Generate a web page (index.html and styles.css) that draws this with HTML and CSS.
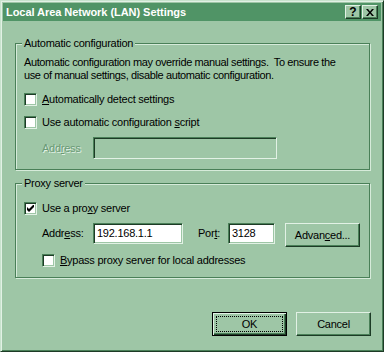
FILE: index.html
```html
<!DOCTYPE html>
<html lang="en">
  <head>
    <meta charset="UTF-8" />
    <title>Local Area Network (LAN) Settings</title>
    <link rel="stylesheet" href="styles.css">
  </head>
  <body>
    <div class="window">
      <div class="titlebar">
        <span class="title">Local Area Network (LAN) Settings</span>
        <div class="caption-buttons">
          <span class="cap-btn help">?</span>
          <span class="cap-btn">
            <svg width="8" height="7" viewBox="0 0 8 7">
              <path d="M0 0h2l2 2.5L6 0h2L5 3.5 8 7H6L4 4.5 2 7H0l3-3.5z" fill="#000" />
            </svg>
          </span>
        </div>
      </div>

      <div class="content">
        <fieldset class="group group-auto">
          <legend>Automatic configuration</legend>
          <p class="note">
            Automatic configuration may override manual settings.&nbsp; To ensure the<br />
            use of manual settings, disable automatic configuration.
          </p>
          <label class="check check-first">
            <span class="box"></span>
            <span><u>A</u>utomatically detect settings</span>
          </label>
          <label class="check">
            <span class="box"></span>
            <span>Use automatic configuration <u>s</u>cript</span>
          </label>
          <div class="field-row disabled">
            <span class="field-label">Add<u>r</u>ess</span>
            <span class="input input-wide"></span>
          </div>
        </fieldset>

        <fieldset class="group group-proxy">
          <legend>Proxy server</legend>
          <label class="check check-proxy">
            <span class="box">
              <svg width="7" height="7" viewBox="0 0 7 7">
                <path d="M0 2v3l2 2 5-5V-1L2 4z" fill="#000" />
              </svg>
            </span>
            <span>Use a pro<u>x</u>y server</span>
          </label>
          <div class="field-row proxy-row">
            <span class="field-label">Addr<u>e</u>ss:</span>
            <span class="input input-address">192.168.1.1</span>
            <span class="port-label">Por<u>t</u>:</span>
            <span class="input input-port">3128</span>
            <span class="btn btn-advanced">Advan<u>c</u>ed...</span>
          </div>
          <label class="check check-bypass">
            <span class="box"></span>
            <span><u>B</u>ypass proxy server for local addresses</span>
          </label>
        </fieldset>

        <div class="dialog-buttons">
          <span class="btn btn-default"><span class="focus">OK</span></span>
          <span class="btn">Cancel</span>
        </div>
      </div>
    </div>
  </body>
</html>
```

FILE: styles.css
```css
* {
  box-sizing: border-box;
}
body {
  margin: 0;
  font-family: "Liberation Sans", Arial, sans-serif;
  font-size: 11px;
  line-height: 13px;
  letter-spacing: -0.25px;
  color: #000;
}
.window {
  width: 384px;
  height: 352px;
  padding: 2px;
  background: #9ec6a6;
  border: 1px solid;
  border-color: #c8e3cd #1d3b26 #1d3b26 #c8e3cd;
  box-shadow: inset 1px 1px 0 #e2f1e5, inset -1px -1px 0 #4a8058;
  display: flex;
  flex-direction: column;
}
.titlebar {
  height: 18px;
  background: #509466;
  color: #fff;
  font-weight: bold;
  letter-spacing: -0.05px;
  display: flex;
  align-items: center;
  padding: 0 3px 0 3px;
}
.caption-buttons {
  margin-left: auto;
  display: flex;
  gap: 1px;
}
.cap-btn {
  width: 16px;
  height: 14px;
  background: #9ec6a6;
  border: 1px solid;
  border-color: #e2f1e5 #1d3b26 #1d3b26 #e2f1e5;
  box-shadow: inset -1px -1px 0 #4a8058;
  display: flex;
  align-items: center;
  justify-content: center;
  color: #000;
}
.cap-btn.help {
  font-size: 12px;
  padding-top: 1px;
}
.content {
  flex: 1;
  display: flex;
  flex-direction: column;
  padding: 0 11px 0 12px;
}
.group {
  margin: 0;
  padding: 0 8px;
  border: 1px solid #4a8058;
  box-shadow: 1px 1px 0 #d6ebda, inset 1px 1px 0 #d6ebda;
  min-inline-size: 0;
}
.group legend {
  padding: 0 2px;
  margin-left: -2px;
  background: #9ec6a6;
  line-height: 13px;
}
.group-auto {
  margin-top: 16px;
  padding-bottom: 10px;
}
.group-proxy {
  margin-top: 7px;
  padding-bottom: 10px;
}
.note {
  margin: 6px 0 0;
  white-space: nowrap;
  letter-spacing: -0.38px;
}
.check {
  display: flex;
  align-items: center;
  gap: 5px;
  height: 13px;
}
.check-first {
  margin-top: 11px;
}
.check + .check {
  margin-top: 10px;
}
.check-proxy {
  margin-top: 12px;
}
.check-bypass {
  margin-top: 7px;
  margin-left: 18px;
}
.box {
  width: 13px;
  height: 13px;
  background: #fff;
  border: 1px solid;
  border-color: #4a8058 #e2f1e5 #e2f1e5 #4a8058;
  box-shadow: inset 1px 1px 0 #1d3b26, inset -1px -1px 0 #9ec6a6;
  display: flex;
  align-items: center;
  justify-content: center;
  flex-shrink: 0;
}
.field-row {
  display: flex;
  align-items: flex-start;
  padding-left: 18px;
  margin-top: 8px;
}
.field-label {
  width: 51px;
  align-self: center;
}
.input {
  height: 21px;
  background: #fff;
  border: 1px solid;
  border-color: #4a8058 #e2f1e5 #e2f1e5 #4a8058;
  box-shadow: inset 1px 1px 0 #1d3b26, inset -1px -1px 0 #9ec6a6;
  padding: 3px 3px 0;
}
.disabled .field-label {
  color: #6a9a76;
  text-shadow: 1px 1px 0 #e2f1e5;
}
.disabled .input {
  height: 22px;
  background: #9ec6a6;
}
.input-wide {
  width: 184px;
}
.proxy-row .field-label,
.proxy-row .port-label {
  margin-top: 4px;
  align-self: flex-start;
}
.input-address {
  width: 90px;
}
.port-label {
  margin-left: 15px;
  width: 30px;
}
.input-port {
  width: 47px;
}
.btn {
  width: 75px;
  height: 24px;
  background: #9ec6a6;
  border: 1px solid;
  border-color: #e2f1e5 #1d3b26 #1d3b26 #e2f1e5;
  box-shadow: inset -1px -1px 0 #4a8058;
  display: flex;
  align-items: center;
  justify-content: center;
}
.btn-advanced {
  margin-left: 10px;
}
.btn-default {
  border-color: #000;
  box-shadow: inset 1px 1px 0 #e2f1e5, inset -1px -1px 0 #1d3b26, inset -2px -2px 0 #4a8058;
  padding: 3px;
}
.focus {
  flex: 1;
  align-self: stretch;
  border: 1px dotted #000;
  display: flex;
  align-items: center;
  justify-content: center;
}
.dialog-buttons {
  margin-top: 34px;
  display: flex;
  justify-content: flex-end;
  gap: 9px;
  margin-right: -1px;
}
```
